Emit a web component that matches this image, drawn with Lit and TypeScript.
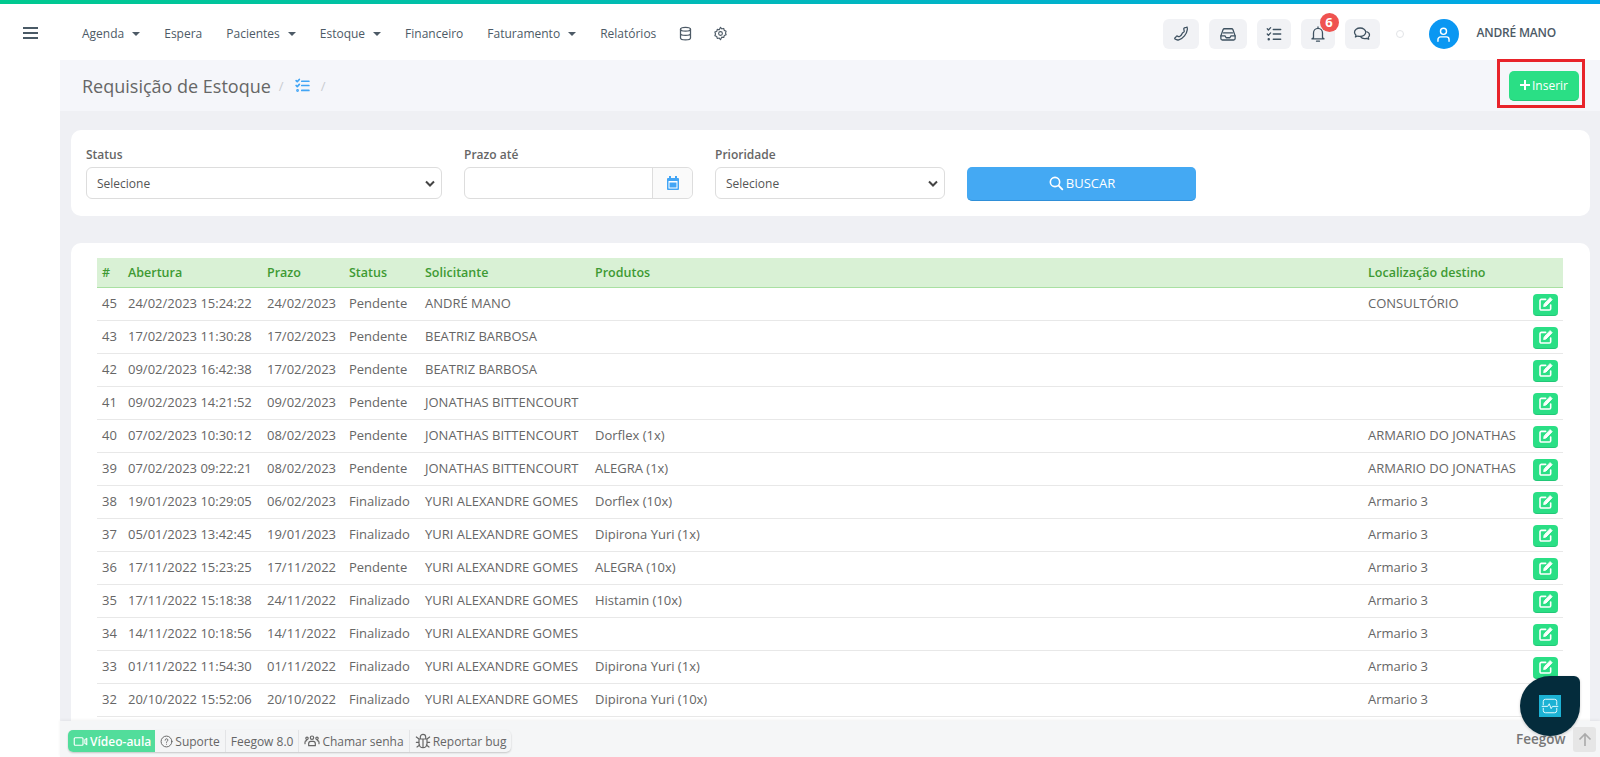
import { LitElement, html, css, svg } from "lit";
import { customElement } from "lit/decorators.js";

const rows = [
  ["45", "24/02/2023 15:24:22", "24/02/2023", "Pendente", "ANDRÉ MANO", "", "CONSULTÓRIO"],
  ["43", "17/02/2023 11:30:28", "17/02/2023", "Pendente", "BEATRIZ BARBOSA", "", ""],
  ["42", "09/02/2023 16:42:38", "17/02/2023", "Pendente", "BEATRIZ BARBOSA", "", ""],
  ["41", "09/02/2023 14:21:52", "09/02/2023", "Pendente", "JONATHAS BITTENCOURT", "", ""],
  ["40", "07/02/2023 10:30:12", "08/02/2023", "Pendente", "JONATHAS BITTENCOURT", "Dorflex (1x)", "ARMARIO DO JONATHAS"],
  ["39", "07/02/2023 09:22:21", "08/02/2023", "Pendente", "JONATHAS BITTENCOURT", "ALEGRA (1x)", "ARMARIO DO JONATHAS"],
  ["38", "19/01/2023 10:29:05", "06/02/2023", "Finalizado", "YURI ALEXANDRE GOMES", "Dorflex (10x)", "Armario 3"],
  ["37", "05/01/2023 13:42:45", "19/01/2023", "Finalizado", "YURI ALEXANDRE GOMES", "Dipirona Yuri (1x)", "Armario 3"],
  ["36", "17/11/2022 15:23:25", "17/11/2022", "Pendente", "YURI ALEXANDRE GOMES", "ALEGRA (10x)", "Armario 3"],
  ["35", "17/11/2022 15:18:38", "24/11/2022", "Finalizado", "YURI ALEXANDRE GOMES", "Histamin (10x)", "Armario 3"],
  ["34", "14/11/2022 10:18:56", "14/11/2022", "Finalizado", "YURI ALEXANDRE GOMES", "", "Armario 3"],
  ["33", "01/11/2022 11:54:30", "01/11/2022", "Finalizado", "YURI ALEXANDRE GOMES", "Dipirona Yuri (1x)", "Armario 3"],
  ["32", "20/10/2022 15:52:06", "20/10/2022", "Finalizado", "YURI ALEXANDRE GOMES", "Dipirona Yuri (10x)", "Armario 3"],
];

const ic = (w: number, body: unknown, cls = "", sw = 1.8) => html`<svg class=${cls} width=${w} height=${w} viewBox="0 0 24 24" fill="none" stroke="currentColor" stroke-width=${sw} stroke-linecap="round" stroke-linejoin="round">${body}</svg>`;

const checklist = svg`<path d="M3 5l1.600 1.600L7.500 3.500M3 12l1.600 1.600 2.900-3.100"/><circle cx="5" cy="19" r=".8"/><path d="M11 6h10M11 12h10M11 19h10"/>`;
const phone = svg`<path d="M19.500 3l-3 .8c-.6.2-.9.7-.8 1.300l.6 3c.1.500-.1.900-.5 1.200l-1.400 1c-.5.400-.8.900-1 1.400-.6 1.600-1.800 2.800-3.200 3.600-.5.300-1.100.300-1.600.1l-1.400-.6c-.5-.2-1-.1-1.300.3l-2 2.200c-.4.500-.3 1.100.2 1.500 1.400 1 3.200 1.500 5 1 5.800-1.700 10.500-7.700 11.300-13.700.2-1.300.1-2.500-.4-3.500z"/>`;
const inbox = svg`<path d="M2.500 14.500V18c0 1.100.9 2 2 2h15c1.100 0 2-.9 2-2v-3.500l-3-8.500c-.3-.7-1-1-1.700-1H7.200c-.7 0-1.400.3-1.700 1z"/><path d="M2.500 14.500H8l1.500 2.500h5l1.500-2.500h5.500M6 10.500h12"/>`;
const bell = svg`<path d="M6 17V10.500a6 6 0 0 1 12 0V17l2 1.500H4zM12 2.500v2M10 21.500h4"/>`;
const chat = svg`<path d="M9.500 4C5.400 4 2 6.500 2 9.700c0 1.500.8 2.900 2 3.900L3.200 16l3.200-1.300c1 .3 2 .5 3.100.5 4.100 0 7.500-2.500 7.500-5.500S13.600 4 9.500 4z"/><path d="M18.500 9c2.100.8 3.500 2.400 3.500 4.200 0 1.300-.7 2.400-1.700 3.300l.7 2.500-3-1.200c-3 .8-6.500-.1-8-2.300"/>`;
const user = svg`<circle cx="12" cy="8" r="3.800"/><path d="M5 20.500v-2.200c0-1.800 1.500-3.300 3.300-3.300h7.400c1.800 0 3.300 1.500 3.300 3.300v2.200"/>`;
const edit = svg`<path d="M19 13.500V19a2 2 0 0 1-2 2H5a2 2 0 0 1-2-2V7a2 2 0 0 1 2-2h6.500" stroke-width="2.400"/><path d="M18.500 2.800l2.700 2.700L12 15l-3.500.8.800-3.500z" fill="currentColor" stroke-width="1.400"/>`;

@customElement("app-root")
export class AppRoot extends LitElement {
  static styles = css`
    :host { display: block; position: relative; width: 1600px; height: 757px; overflow: hidden; background: #fff; font-family: "Open Sans", sans-serif; font-size: 13px; color: #666; }
    * { box-sizing: border-box; }
    .accent { height: 4px; background: linear-gradient(90deg, #00c98f, #00a6ea); }
    .nav { height: 56px; display: flex; align-items: center; background: #fff; }
    .burger { width: 60px; display: flex; justify-content: center; padding: 0 0 0 1px; color: #4a5a66; margin-top: 3px; }
    .menu { display: flex; align-items: center; margin-left: 22px; gap: 24px; color: #4d5a66; font-size: 12px; margin-top: 3px; }
    .menu span { display: inline-flex; align-items: center; }
    .mi { margin: 0 -2px; }
    .caret { width: 0; height: 0; border-left: 4px solid transparent; border-right: 4px solid transparent; border-top: 4.500px solid #4d5a66; margin-left: 8px; }
    .tools { margin-left: auto; display: flex; align-items: center; margin-top: 4px; height: 30px; }
    .tool { height: 30px; border-radius: 6px; background: #f1f2f5; color: #3e5160; display: flex; align-items: center; justify-content: center; position: relative; }
    .badge { position: absolute; left: 19px; top: -6px; width: 19px; height: 19px; border-radius: 50%; background: #ef5350; color: #fff; font-size: 13px; font-weight: 700; line-height: 19px; text-align: center; }
    .dot { width: 8px; height: 8px; border-radius: 50%; border: 1px solid #e2e4e7; margin: 0 25px 0 16px; }
    .avatar { width: 30px; height: 30px; border-radius: 50%; background: #0a97f2; color: #fff; display: flex; align-items: center; justify-content: center; }
    .uname { font-size: 12px; font-weight: 600; color: #4d5a66; letter-spacing: -.2px; margin: -4px 44px 0 18px; }
    .body { display: flex; height: 697px; }
    .side { width: 60px; background: #fff; flex: none; }
    .main { flex: 1; background: #eff0f4; min-width: 0; }
    .phead { height: 51px; background: #f5f6fa; display: flex; align-items: center; padding-left: 22px; gap: 8px; color: #c9ccd1; }
    .phead h1 { margin: 0; font-size: 18px; font-weight: 400; color: #666; }
    .phead .li { color: #42a5f5; display: flex; margin: 0 2px; }
    .ins { margin-left: auto; margin-right: 21px; width: 70px; height: 30px; border-radius: 5px; background: #2adf85; border-bottom: 1px solid #22c777; color: #fff; font-size: 12px; display: flex; align-items: center; justify-content: center; gap: 1px; padding-right: 1px; }
    .card { background: #fff; border-radius: 10px; margin: 19px 10px 0 11px; }
    .filters { height: 86px; display: flex; padding: 15px 16px 0 15px; }
    .field { display: flex; flex-direction: column; margin-right: 22px; }
    .field label { font-size: 12px; font-weight: 600; color: #666; height: 22px; line-height: 19px; }
    .sel { height: 32px; border: 1px solid #ddd; border-radius: 6px; display: flex; align-items: center; justify-content: space-between; padding: 0 6px 0 10px; font-size: 12px; color: #555; background: #fff; }
    .group { display: flex; height: 32px; border: 1px solid #ddd; border-radius: 6px; width: 229px; }
    .group i { flex: 1; }
    .addon { width: 40px; border-left: 1px solid #ddd; background: #fafafa; border-radius: 0 6px 6px 0; color: #42a5f5; display: flex; align-items: center; justify-content: center; }
    .buscar { width: 229px; height: 34px; margin-top: 22px; padding-bottom: 2px; border-radius: 5px; background: #44a9f3; border-bottom: 1px solid #2f8fd8; color: #fff; font-size: 13px; display: flex; align-items: center; justify-content: center; gap: 2px; }
    .tcard { margin-top: 27px; padding: 15px 26px 0 26px; height: 520px; }
    table { border-collapse: collapse; table-layout: fixed; width: 1466px; font-size: 13px; }
    th { height: 29px; background: #d9f1d5; border-bottom: 1px solid #a9e0a2; color: #3e9a33; font-weight: 600; font-size: 12.500px; text-align: left; padding: 0 5px; }
    td { height: 33px; border-bottom: 1px solid #e8e8e8; padding: 0 5px 2px; white-space: nowrap; color: #666; overflow: hidden; }
    .e { width: 25px; height: 22px; margin: 2px 0 -2px; border-radius: 4px; background: #2adf85; color: #fff; display: flex; align-items: center; justify-content: center; border-bottom: 1px solid #22c777; }
    .footer { position: absolute; left: 60px; right: 0; top: 721px; height: 36px; background: rgba(245,246,247,.96); box-shadow: 0 -1px 3px rgba(0,0,0,.06); display: flex; align-items: flex-start; padding: 9px 0 0 8px; }
    .fbtns { display: flex; height: 22px; border-radius: 5px; box-shadow: 0 1px 2px rgba(0,0,0,.2); font-size: 12px; color: #666; background: #f4f5f6; }
    .fbtns span { display: flex; align-items: center; gap: 2px; padding: 0 5px; border-right: 1px solid #e3e4e6; white-space: nowrap; }
    .fbtns .v { background: #52dd9b; color: #fff; border-radius: 5px 0 0 5px; border: 0; font-weight: 600; padding: 0 4px 0 5px; }
    .brand { position: absolute; left: 1456px; top: 9px; font-size: 13.500px; font-weight: 600; color: #777; }
    .up { position: absolute; left: 1513px; top: 6px; width: 23px; height: 25px; background: #e6e6e6; border-radius: 3px; color: #aaa; display: flex; align-items: center; justify-content: center; }
    .fab { position: absolute; left: 1520px; top: 676px; width: 60px; height: 60px; background: #042c3c; border-radius: 50% 6px 50% 50%; display: flex; align-items: center; justify-content: center; box-shadow: 0 1px 3px rgba(0,0,0,.2); }
    .fab div { width: 22px; height: 22px; background: #1cb2d4; color: #e8fbff; display: flex; align-items: center; justify-content: center; }
    .mark { position: absolute; left: 1497px; top: 59px; width: 88px; height: 49px; border: 3px solid #e8232a; }
  `;

  private tool(w: number, body: unknown, ml: number, extra: unknown = "") {
    return html`<div class="tool" style="width:${w}px;margin-left:${ml}px">${ic(18, body, "", 1.7)}${extra}</div>`;
  }

  render() {
    return html`
      <div class="accent"></div>
      <div class="nav">
        <div class="burger"><svg width="16" height="13" viewBox="0 0 16 13" fill="currentColor"><rect width="15" height="2"/><rect y="5" width="15" height="2"/><rect y="10" width="15" height="2"/></svg></div>
        <div class="menu">
          <span>Agenda<i class="caret"></i></span><span>Espera</span><span>Pacientes<i class="caret"></i></span><span>Estoque<i class="caret"></i></span><span>Financeiro</span><span>Faturamento<i class="caret"></i></span><span>Relatórios</span>
          ${ic(15, svg`<ellipse cx="12" cy="5" rx="8" ry="3"/><path d="M4 5v14c0 1.700 3.600 3 8 3s8-1.300 8-3V5M4 12c0 1.700 3.600 3 8 3s8-1.300 8-3"/>`, "mi", 2)}
          ${ic(15, svg`<circle cx="12" cy="12" r="3"/><path d="M12 2l2 2.500 3.200-.6.800 3.100 3 1.300-1 3 1 2.700-3 1.300-.8 3.100-3.200-.6L12 22l-2-2.700-3.200.6-.8-3.100-3-1.300 1-2.700-1-3 3-1.300.8-3.100 3.200.6z"/>`, "mi")}
        </div>
        <div class="tools">
          ${this.tool(36, phone, 0)}
          ${this.tool(38, inbox, 10)}
          ${this.tool(34, checklist, 10)}
          ${this.tool(34, bell, 10, html`<div class="badge">6</div>`)}
          ${this.tool(35, chat, 10)}
          <div class="dot"></div>
          <div class="avatar">${ic(19, user)}</div>
          <div class="uname">ANDRÉ MANO</div>
        </div>
      </div>
      <div class="body">
        <div class="side"></div>
        <div class="main">
          <div class="phead">
            <h1>Requisição de Estoque</h1><span>/</span>
            <span class="li">${ic(17, checklist, "", 2.4)}</span><span>/</span>
            <div class="ins"><svg width="12" height="12" viewBox="0 0 12 12" stroke="currentColor" stroke-width="2"><path d="M6 1v10M1 6h10"/></svg>Inserir</div>
          </div>
          <div class="card filters">
            <div class="field" style="width:356px"><label>Status</label><div class="sel">Selecione ${this.chev()}</div></div>
            <div class="field"><label>Prazo até</label><div class="group"><i></i><div class="addon"><svg width="12" height="14" viewBox="0 0 12 14" fill="currentColor"><path d="M2 0h2v2h4V0h2v2h1a1 1 0 0 1 1 1v10a1 1 0 0 1-1 1H1a1 1 0 0 1-1-1V3a1 1 0 0 1 1-1h1z"/><path fill="#fff" d="M1.500 5h9v7.500h-9z"/><path d="M2.500 6.500h7v5h-7z"/></svg></div></div></div>
            <div class="field" style="width:230px"><label>Prioridade</label><div class="sel">Selecione ${this.chev()}</div></div>
            <div class="buscar">${ic(16, svg`<circle cx="10.500" cy="10.500" r="7" stroke-width="2.400"/><path d="M16 16l5.500 5.500" stroke-width="2.800"/>`)}BUSCAR</div>
          </div>
          <div class="card tcard">
            <table>
              <colgroup><col style="width:26px"><col style="width:139px"><col style="width:82px"><col style="width:76px"><col style="width:170px"><col style="width:773px"><col style="width:165px"><col style="width:35px"></colgroup>
              <thead><tr><th>#</th><th>Abertura</th><th>Prazo</th><th>Status</th><th>Solicitante</th><th>Produtos</th><th>Localização destino</th><th></th></tr></thead>
              <tbody>
                ${rows.map((r) => html`<tr>${r.map((c) => html`<td>${c}</td>`)}<td><div class="e">${ic(16, edit)}</div></td></tr>`)}
              </tbody>
            </table>
          </div>
        </div>
      </div>
      <div class="footer">
        <div class="fbtns">
          <span class="v">${ic(15, svg`<rect x="2" y="6" width="14" height="12" rx="1.500"/><path d="M19 9l3-2v10l-3-2z"/>`)}Vídeo-aula</span>
          <span>${ic(13, svg`<circle cx="12" cy="12" r="10"/><path d="M9.500 9.500a2.500 2.500 0 1 1 3.500 2.300c-.7.300-1 .8-1 1.700M12 17v.1"/>`)}Suporte</span>
          <span>Feegow 8.0</span>
          <span>${ic(16, svg`<circle cx="12" cy="7" r="2.500"/><circle cx="4.500" cy="8" r="1.800"/><circle cx="19.500" cy="8" r="1.800"/><path d="M7 19v-3c0-2 1.500-3.500 3-3.500h4c1.500 0 3 1.500 3 3.500v3zM1.500 16v-2c0-1.500 1-2.500 2.500-2.500M22.500 16v-2c0-1.500-1-2.500-2.500-2.500"/>`)}Chamar senha</span>
          <span style="border:0">${ic(16, svg`<path d="M8 8V6a4 4 0 0 1 8 0v2M6 9h12v7a6 6 0 0 1-12 0zM12 9v13M2 6l4 3M22 6l-4 3M2 14h4M22 14h-4M3 21l4-3M21 21l-4-3"/>`)}Reportar bug</span>
        </div>
        <div class="brand">Feegow</div>
        <div class="up"><svg width="14" height="15" viewBox="0 0 14 15" fill="none" stroke="currentColor" stroke-width="1.600"><path d="M7 14V2M1.500 7.500L7 2l5.500 5.500"/></svg></div>
      </div>
      <div class="fab"><div>${ic(18, svg`<path d="M3 10.500V6a3 3 0 0 1 3-3h12a3 3 0 0 1 3 3v4.500M3 15v3a3 3 0 0 0 3 3h12a3 3 0 0 0 3-3v-3"/><path d="M1.500 12.500H9l2-3.500 2.500 6.500 1.800-3H22.500"/>`, "", 1.3)}</div></div>
      <div class="mark"></div>
    `;
  }

  private chev() {
    return html`<svg width="10" height="7" viewBox="0 0 10 7" fill="none" stroke="#444" stroke-width="2"><path d="M1 1.500l4 4 4-4"/></svg>`;
  }
}
